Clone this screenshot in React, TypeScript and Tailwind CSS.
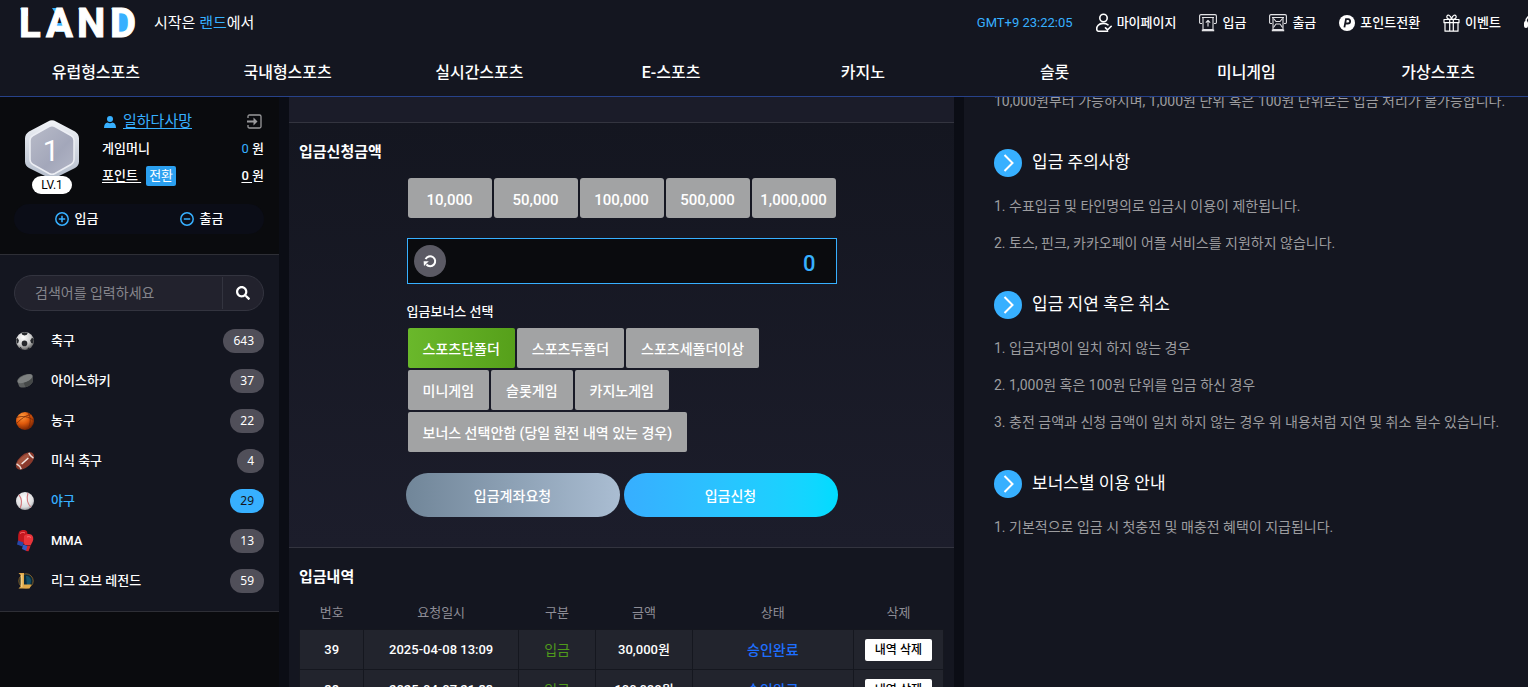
import { useState } from "react";
import type { ReactNode } from "react";
import { FaSearch } from "react-icons/fa";

type Sport = {
  name: string;
  count: number;
  icon: ReactNode;
};

type Deposit = {
  id: number;
  date: string;
  amount: string;
};

const menus = [
  "유럽형스포츠",
  "국내형스포츠",
  "실시간스포츠",
  "E-스포츠",
  "카지노",
  "슬롯",
  "미니게임",
  "가상스포츠",
];

const amounts = [10000, 50000, 100000, 500000, 1000000];

const bonuses = [
  "스포츠단폴더",
  "스포츠두폴더",
  "스포츠세폴더이상",
  "미니게임",
  "슬롯게임",
  "카지노게임",
  "보너스 선택안함 (당일 환전 내역 있는 경우)",
];

const deposits: Deposit[] = [
  { id: 39, date: "2025-04-08 13:09", amount: "30,000원" },
  { id: 38, date: "2025-04-07 21:33", amount: "100,000원" },
];

const notices = [
  {
    title: "입금 주의사항",
    items: [
      "1. 수표입금 및 타인명의로 입금시 이용이 제한됩니다.",
      "2. 토스, 핀크, 카카오페이 어플 서비스를 지원하지 않습니다.",
    ],
  },
  {
    title: "입금 지연 혹은 취소",
    items: [
      "1. 입금자명이 일치 하지 않는 경우",
      "2. 1,000원 혹은 100원 단위를 입금 하신 경우",
      "3. 충전 금액과 신청 금액이 일치 하지 않는 경우 위 내용처럼 지연 및 취소 될수 있습니다.",
    ],
  },
  {
    title: "보너스별 이용 안내",
    items: ["1. 기본적으로 입금 시 첫충전 및 매충전 혜택이 지급됩니다."],
  },
];

/* Icons */

const SoccerIcon = () => (
  <svg width="20" height="20" viewBox="0 0 20 20">
    <defs>
      <radialGradient id="soccer" cx="40%" cy="30%" r="70%">
        <stop offset="0" stopColor="#fff" />
        <stop offset="0.6" stopColor="#cfcfcf" />
        <stop offset="1" stopColor="#666" />
      </radialGradient>
    </defs>
    <circle cx="10" cy="10" r="9" fill="url(#soccer)" />
    <g fill="#26282c">
      <path d="M6.500 2 9.500 1.200l3.200.6-.8 2-2.400.6-2.200-.6z" />
      <circle cx="9.500" cy="12.400" r="2.800" />
      <path d="M1.200 8.200 2.600 7l1.400 2.600L3.200 12l-1.400.6z" />
      <path d="M18.800 8 17 6.800l-1.800 2.600 1 2.600 2 .4z" />
      <path d="m4.500 16.400 1.200-.4 1.400 2-1.200-.2zM15 17l-1.600-.4-1.400 2 1.400-.2z" />
    </g>
  </svg>
);

const PuckIcon = () => (
  <svg width="20" height="20" viewBox="0 0 20 20">
    <path d="M2.300 10.500c-.4-2.500 3.200-5.600 8.200-6.900 4-1 6.700-.4 7.200 1.400l.2 5c-.4 2.600-3.500 5.200-7.400 6.200-3.200.8-5.800.3-6.500-1.200z" fill="#5c5f5f" />
    <path d="M8.500 11.500c4.500-1 8-3.600 9.200-6l.2 4.500c-.4 2.600-3.500 5.200-7.400 6.200z" fill="#454848" />
    <ellipse cx="10" cy="7.800" rx="8" ry="3.300" transform="rotate(-24 10 7.800)" fill="#7d8080" />
  </svg>
);

const BasketballIcon = () => (
  <svg width="20" height="20" viewBox="0 0 20 20">
    <defs>
      <radialGradient id="basket" cx="35%" cy="25%" r="80%">
        <stop offset="0" stopColor="#ff9a3c" />
        <stop offset="0.5" stopColor="#e05a0c" />
        <stop offset="1" stopColor="#6e1f02" />
      </radialGradient>
    </defs>
    <circle cx="10" cy="10" r="9" fill="url(#basket)" />
    <path
      d="M2 6.500c5-2 12-1 16.500 3M1.500 12.500c5-5 9-8 14.500-9M13 2c3 4 3 10 0 16"
      fill="none"
      stroke="#7a2806"
      strokeWidth="0.800"
    />
  </svg>
);

const FootballIcon = () => (
  <svg width="20" height="20" viewBox="0 0 20 20">
    <g transform="rotate(-42 10 10)">
      <ellipse cx="10" cy="10" rx="11" ry="6.200" fill="#8a3a2c" />
      <ellipse cx="9.500" cy="8" rx="8" ry="3" fill="#a4543f" />
      <path d="M1.800 6.500q1.200 3.500 0 7M18.200 6.500q-1.200 3.500 0 7" stroke="#e9dcd8" strokeWidth="1.500" fill="none" />
      <path d="M5.500 10h9" stroke="#f3e9e6" strokeWidth="1.500" />
    </g>
  </svg>
);

const BaseballIcon = () => (
  <svg width="20" height="20" viewBox="0 0 20 20">
    <defs>
      <radialGradient id="baseball" cx="45%" cy="35%" r="70%">
        <stop offset="0" stopColor="#fff" />
        <stop offset="0.700" stopColor="#dcdcde" />
        <stop offset="1" stopColor="#8a8a90" />
      </radialGradient>
    </defs>
    <circle cx="10" cy="10" r="9" fill="url(#baseball)" />
    <path d="M4 3.800c3 4 3 9 1.200 13.200M13 2c-1.500 5-.8 10 2.600 14" fill="none" stroke="#d0787c" strokeWidth="1.100" />
  </svg>
);

const GloveIcon = () => (
  <svg width="20" height="24" viewBox="0 0 20 24">
    <path d="M4 3c2-2.500 6-2.600 8-.6l1 4.600-4 8-6-1.500C3.500 10 2.600 6 4 3z" fill="#c4181f" />
    <path d="M9 7c3-3 8.500-2.400 9.200 1.500.6 3-1.400 5.500-2.500 8L9.500 16c-1-2.500-.4-6-.5-9z" fill="#e8343a" />
    <path d="m3 11.500 5.500 2-1 4L2 15.500z" fill="#2747a8" />
    <path d="m8 15.500 5 1.500-1.500 5-4.500-2z" fill="#3459c4" />
    <path d="m12.500 16.600 3 .7-2 5-2.500-.3z" fill="#d52229" />
    <path d="M5 4.500c1.500-1.200 3.500-1.400 5-.5M12 8c1.500-.8 3-.4 4 .6" stroke="#ff7478" strokeWidth="0.900" fill="none" />
  </svg>
);

const LolIcon = () => (
  <svg width="20" height="20" viewBox="0 0 20 20">
    <circle cx="11" cy="10" r="7.200" fill="#0b2a3a" stroke="#7c5a25" strokeWidth="1" />
    <path d="M11 5c3 0 5 2 5 5s-2 5-4 5z" fill="#12506a" />
    <path d="M3.500 2H9v11.500h7.500L14.500 17.500H3.500L5.500 15.500V4z" fill="#e0a94a" />
    <path d="M6.800 3.500v12.600" stroke="#f6dc97" strokeWidth="1" />
  </svg>
);

const sports: Sport[] = [
  { name: "축구", count: 643, icon: <SoccerIcon /> },
  { name: "아이스하키", count: 37, icon: <PuckIcon /> },
  { name: "농구", count: 22, icon: <BasketballIcon /> },
  { name: "미식 축구", count: 4, icon: <FootballIcon /> },
  { name: "야구", count: 29, icon: <BaseballIcon /> },
  { name: "MMA", count: 13, icon: <GloveIcon /> },
  { name: "리그 오브 레전드", count: 59, icon: <LolIcon /> },
];

const MyPageIcon = () => (
  <svg width="16" height="20" viewBox="0 0 16 20" fill="none" stroke="#fff" strokeWidth="1.600" strokeLinecap="round" strokeLinejoin="round">
    <circle cx="7.500" cy="5" r="3.700" />
    <path d="M12 11.800c-2.500-2-7.500-2-9.800.4-1.600 1.600-1.600 3.600-1.300 4.800.2.800.8 1.200 1.500 1.200h9.200M9.500 14.800l2.200 2 3.500-3.500" />
  </svg>
);

const CashIcon = ({ out }: { out?: boolean }) => (
  <svg width="18" height="18" viewBox="0 0 18 18" fill="none" stroke="#e3e3e6" strokeWidth="1.100" strokeLinejoin="round">
    <path d="M3 9.500H1.500a.9.900 0 0 1-.9-.9V2c0-.8.600-1.400 1.400-1.400h14c.8 0 1.400.600 1.400 1.400v6.600a.9.900 0 0 1-.9.900H15" />
    <path d="M3 3.500h12M4 3.500v12h10v-12" />
    <path d="M2.800 16.400h12.400" strokeWidth="1.800" />
    {out ? (
      <path d="m4.500 4.500 2.500 3h4l2.500-3M4.500 13.500l2.500-3.500h4l2.500 3.500" />
    ) : (
      <path d="M9 12.500V6.500M6.800 8.600 9 6.400l2.200 2.200" />
    )}
  </svg>
);

const PointIcon = () => (
  <svg width="16" height="16" viewBox="0 0 16 16">
    <circle cx="8" cy="8" r="8" fill="#fff" />
    <path d="M5.400 12.400 7 4.200h2.200c2.600 0 2.700 4.300-.4 4.300H6.400" fill="none" stroke="#141620" strokeWidth="1.800" />
  </svg>
);

const EventIcon = () => (
  <svg width="17" height="18" viewBox="0 0 17 18" fill="none" stroke="#fff" strokeWidth="1.200" strokeLinejoin="round">
    <path d="M1 5.500h15v3.200H1zM2 8.700h13v8.500H2zM6.700 5.500v11.700M10.300 5.500v11.700" />
    <path d="M8.500 5.300C6 5.500 3.500 4.500 3.800 2.500 4.200.3 7.600.6 8.500 5.300zM8.500 5.300c2.500.2 5-.8 4.700-2.800-.4-2.200-3.800-1.900-4.700 2.800z" />
  </svg>
);

const SupportIcon = () => (
  <svg width="18" height="18" viewBox="0 0 18 18" fill="none" stroke="#fff" strokeWidth="1.500">
    <path d="M2 9V7.500a7 6.500 0 0 1 14 0V9" />
    <rect x="0" y="7" width="4" height="7" rx="2" fill="#fff" stroke="none" />
    <rect x="14" y="7" width="4" height="7" rx="2" fill="#fff" stroke="none" />
  </svg>
);

const LevelBadge = () => (
  <svg width="56" height="60" viewBox="0 0 56 60">
    <defs>
      <linearGradient id="rim" x1="0" y1="0" x2="0" y2="1">
        <stop offset="0" stopColor="#f1f3f7" />
        <stop offset="1" stopColor="#b3bccb" />
      </linearGradient>
      <linearGradient id="face" x1="0" y1="0" x2="1" y2="1">
        <stop offset="0" stopColor="#b9bcc9" />
        <stop offset="0.600" stopColor="#a3a7ba" />
        <stop offset="1" stopColor="#b4b7c7" />
      </linearGradient>
    </defs>
    <path d="M24 1.500Q28 -1 32 1.500L51 11.500Q55 14 55 18.500v23q0 4-4 6.500L32 57.500q-4 2-8 0L5 48Q1 45.500 1 41.500V18.500q0-4.500 4-7z" fill="url(#rim)" />
    <path d="M25 6.500q3-1.500 6 0l16 9q3 1.500 3 5v19q0 3-3 5l-16 9q-3 1.500-6 0l-16-9q-3-2-3-5v-19q0-3.500 3-5z" fill="url(#face)" stroke="#eceef4" strokeWidth="1.500" />
    <text x="27" y="41" textAnchor="middle" fill="#fff" fontSize="29" fontWeight="400" fontFamily="Roboto, sans-serif">
      1
    </text>
  </svg>
);

const Logo = () => (
  <svg width="118" height="44" viewBox="0 0 118 44" role="img" aria-label="LAND">
    <path d="M0 7h8v8H3zM32 7h8l-3 8zM58 7h8v9h-4zM91 7h8v8h-4zM36 22h9v9h-9zM97 11h12v20H97z" fill="#37b0ff" />
    <g fill="#fff" stroke="#fff" strokeWidth="1" fontSize="40" fontWeight="700" fontFamily="Roboto, sans-serif">
      <text x="-1" y="36">L</text>
      <text x="26" y="36">A</text>
      <text x="57" y="36">N</text>
      <text x="90" y="36">D</text>
    </g>
  </svg>
);

const topLinks = [
  { label: "마이페이지", icon: <MyPageIcon /> },
  { label: "입금", icon: <CashIcon /> },
  { label: "출금", icon: <CashIcon out /> },
  { label: "포인트전환", icon: <PointIcon /> },
  { label: "이벤트", icon: <EventIcon /> },
];

function Header() {
  return (
    <header className="-mr-1.5 shrink-0 border-b border-[#27428a] bg-[#141620]">
      <div className="flex h-11 items-center pt-0.5 pl-5">
        <a href="#home">
          <Logo />
        </a>
        <p className="ml-4 text-[15px]">
          시작은 <span className="text-[#37b0ff]">랜드</span>에서
        </p>
        <div className="-mr-2 ml-auto flex items-center gap-[23px] text-[13px] font-medium whitespace-nowrap">
          <span className="font-normal text-[#37b0ff]">GMT+9 23:22:05</span>
          {topLinks.map((link) => (
            <a key={link.label} href="#menu" className="flex items-center gap-[5px]">
              {link.icon}
              {link.label}
            </a>
          ))}
          <a href="#support" aria-label="고객센터">
            <SupportIcon />
          </a>
        </div>
      </div>
      <nav className="grid h-[52px] grid-cols-8 items-center pt-1.5 text-center text-base font-medium">
        {menus.map((menu) => (
          <a key={menu} href="#menu">
            {menu}
          </a>
        ))}
      </nav>
    </header>
  );
}

function Profile() {
  return (
    <div className="border-b border-[#2e2f36] pt-[11px] pr-[15px] pb-5 pl-[14px] text-[13px] font-medium">
      <div className="flex pl-[10px]">
        <div className="flex w-14 flex-col items-center pt-3">
          <LevelBadge />
          <span className="relative -mt-1 h-[18px] w-10 rounded-full bg-white text-center text-xs leading-[18px] font-normal text-black">
            LV.1
          </span>
        </div>
        <div className="ml-[22px] flex-1">
          <div className="flex h-[27px] items-center">
            <svg width="12" height="12" viewBox="0 0 12 12" fill="#37b0ff" className="mr-[7px] ml-0.5">
              <circle cx="6" cy="3" r="3" />
              <path d="M0 12c0-3.500 1.500-5.300 3.500-5.500 1.500 1 3.500 1 5 0 2 .2 3.500 2 3.500 5.500z" />
            </svg>
            <a href="#me" className="text-[15px] font-normal text-[#37b0ff] underline underline-offset-2">
              일하다사망
            </a>
            <button aria-label="로그아웃" className="mr-0.5 ml-auto">
              <svg width="15" height="15" viewBox="0 0 15 15" fill="none" stroke="#9a9a9c" strokeWidth="1.300">
                <path d="M1 4V2.500Q1 1 2.500 1h10Q14 1 14 2.500v10q0 1.500-1.500 1.500h-10Q1 14 1 12.500V11" />
                <path d="M0 7.500h8" strokeWidth="2" />
                <path d="m6.500 3.500 4 4-4 4z" fill="#9a9a9c" stroke="none" />
              </svg>
            </button>
          </div>
          <div className="flex h-[27px] items-center">
            <span>게임머니</span>
            <span className="ml-auto">
              <span className="font-normal text-[#37b0ff]">0</span> 원
            </span>
          </div>
          <div className="flex h-[27px] items-center">
            <a href="#point" className="underline underline-offset-2">
              포인트&nbsp;
            </a>
            <button className="ml-[5px] h-5 w-[30px] rounded-xs bg-[#2ba0f0] font-normal">전환</button>
            <a href="#point" className="ml-auto">
              <span className="underline underline-offset-2">0&nbsp;</span>원
            </a>
          </div>
        </div>
      </div>
      <div className="mt-[10px] grid h-[30px] grid-cols-2 rounded-full bg-[#0b0d17]">
        <button className="flex items-center justify-center gap-1.5">
          <svg width="14" height="14" viewBox="0 0 14 14" fill="none" stroke="#37b0ff" strokeWidth="1.500">
            <circle cx="7" cy="7" r="6.200" />
            <path d="M7 3.800v6.400M3.800 7h6.400" />
          </svg>
          입금
        </button>
        <button className="flex items-center justify-center gap-1.5">
          <svg width="14" height="14" viewBox="0 0 14 14" fill="none" stroke="#37b0ff" strokeWidth="1.500">
            <circle cx="7" cy="7" r="6.200" />
            <path d="M3.800 7h6.400" />
          </svg>
          출금
        </button>
      </div>
    </div>
  );
}

function Sidebar() {
  const [selected, setSelected] = useState("야구");

  return (
    <aside className="w-[279px] shrink-0 bg-[#0a0b0e]">
      <Profile />
      <div className="border-b border-[#2e2f36] bg-[#141620] pt-5 pr-[15px] pb-[10px] pl-[14px]">
        <form className="mb-[10px] flex h-9 items-center rounded-full border border-[#33343f] bg-[#22222d]">
          <input
            aria-label="검색"
            placeholder="검색어를 입력하세요"
            className="min-w-0 flex-1 pl-5 text-sm outline-none placeholder:text-[#85858c]"
          />
          <button type="button" aria-label="검색하기" className="flex h-8 w-[41px] items-center justify-center border-l border-[#33343f]">
            <FaSearch size={14} />
          </button>
        </form>
        <ul>
          {sports.map((sport) => {
            const isActive = sport.name === selected;
            return (
              <li key={sport.name}>
                <button
                  onClick={() => setSelected(sport.name)}
                  className={`flex h-10 w-full items-center text-[13px] font-medium ${isActive ? "text-[#37b0ff]" : "text-white"}`}
                >
                  <span className="ml-px mr-4">{sport.icon}</span>
                  {sport.name}
                  <span
                    className={`ml-auto h-6 rounded-full px-[10px] font-['Noto_Sans'] text-xs leading-6 font-normal ${
                      isActive ? "bg-[#37b0ff] text-[#141620]" : "bg-[#504f59] text-white"
                    }`}
                  >
                    {sport.count}
                  </span>
                </button>
              </li>
            );
          })}
        </ul>
      </div>
    </aside>
  );
}

function DepositForm() {
  const [amount, setAmount] = useState(0);
  const [bonus, setBonus] = useState(bonuses[0]);

  return (
    <section className="border-b border-[#33343f] bg-linear-to-b from-[#141620] to-[#1c1d2b] px-[10px] pt-4 pb-[30px]">
      <h2 className="text-[15px] leading-[26px] font-bold">입금신청금액</h2>
      <div className="mx-auto mt-[13px] w-[430px] max-w-full">
        <div className="grid grid-cols-5 gap-0.5 px-px">
          {amounts.map((value) => (
            <button
              key={value}
              type="button"
              onClick={() => setAmount(amount + value)}
              className="h-10 rounded-[3px] bg-[#a2a3a4] pt-1 text-[15px] font-medium"
            >
              {value.toLocaleString("en-US")}
            </button>
          ))}
        </div>
        <div className="mt-5 flex h-[46px] items-center border border-[#37b0ff] bg-[#0a0b0e] pr-5 pl-1.5">
          <button
            type="button"
            aria-label="초기화"
            onClick={() => setAmount(0)}
            className="flex size-8 shrink-0 items-center justify-center rounded-full bg-[#5b5a64]"
          >
            <svg width="14" height="14" viewBox="0 0 14 14">
              <path d="M2.600 5.200A5 5 0 1 1 3.400 10.500" fill="none" stroke="#fff" strokeWidth="2" />
              <path d="M.6 7.200h5.200L1 12z" fill="#fff" />
            </svg>
          </button>
          <input
            aria-label="입금신청금액"
            readOnly
            value={amount.toLocaleString("en-US")}
            className="min-w-0 flex-1 pt-1 text-right text-[22px] font-medium text-[#37b0ff] outline-none"
          />
        </div>
        <p className="mt-4 text-[13px] leading-6 font-medium">입금보너스 선택</p>
        <div className="mt-1 flex flex-wrap gap-0.5 px-px">
          {bonuses.map((item) => (
            <button
              key={item}
              type="button"
              onClick={() => setBonus(item)}
              className={`h-10 rounded-xs px-[15px] pt-px text-sm font-medium ${
                item === bonus ? "bg-linear-to-r from-[#6ab82b] to-[#56a01a]" : "bg-[#a2a3a4]"
              }`}
            >
              {item}
            </button>
          ))}
        </div>
        <div className="-mx-px mt-[21px] grid grid-cols-2 gap-1 text-sm font-medium">
          <button type="button" className="h-11 rounded-full bg-linear-to-r from-[#718699] to-[#aabdd2] pt-px">
            입금계좌요청
          </button>
          <button type="button" className="h-11 rounded-full bg-linear-to-r from-[#37aeff] to-[#00dcff] pt-px">
            입금신청
          </button>
        </div>
      </div>
    </section>
  );
}

function DepositHistory() {
  return (
    <section className="px-[10px] pt-4">
      <h2 className="text-[15px] leading-[26px] font-bold">입금내역</h2>
      <table className="mt-[3px] w-full table-fixed border-collapse text-center text-[13px]">
        <colgroup>
          <col className="w-[10%]" />
          <col className="w-[24%]" />
          <col className="w-[12%]" />
          <col className="w-[15%]" />
          <col className="w-[25%]" />
          <col className="w-[14%]" />
        </colgroup>
        <thead>
          <tr className="h-9 text-[#8e8d96]">
            {["번호", "요청일시", "구분", "금액", "상태", "삭제"].map((head) => (
              <th key={head} className="pt-1 font-normal">
                {head}
              </th>
            ))}
          </tr>
        </thead>
        <tbody>
          {deposits.map((row) => (
            <tr key={row.id} className="h-10 bg-[#22242d] font-medium *:border *:border-[#15171f] *:pt-0.5">
              <td>{row.id}</td>
              <td>{row.date}</td>
              <td className="text-sm font-normal text-[#4f9a1c]">입금</td>
              <td>{row.amount}</td>
              <td className="text-sm text-[#1e6fff]">승인완료</td>
              <td>
                <button className="mx-auto block h-[22px] rounded-xs bg-white px-[10px] text-xs whitespace-nowrap text-black">
                  내역 삭제
                </button>
              </td>
            </tr>
          ))}
        </tbody>
      </table>
    </section>
  );
}

function Notice() {
  return (
    <section className="min-w-0 flex-1 bg-[#141620] pl-[30px]">
      <p className="-mt-[14px] text-sm leading-[37px] whitespace-nowrap text-[#9c9c9f]">
        10,000원부터 가능하시며, 1,000원 단위 혹은 100원 단위로는 입금 처리가 불가능합니다.
      </p>
      {notices.map((notice) => (
        <div key={notice.title} className="mt-[29px]">
          <h3 className="flex h-7 items-center gap-[10px] text-[17px] font-normal">
            <svg width="28" height="28" viewBox="0 0 28 28" fill="none">
              <circle cx="14" cy="14" r="14" fill="#37b0ff" />
              <path d="m10.500 6 8 8-8 8" stroke="#fff" strokeWidth="2" />
            </svg>
            {notice.title}
          </h3>
          <ul className="mt-[11px] text-sm leading-[37px] whitespace-nowrap text-[#9c9c9f]">
            {notice.items.map((item) => (
              <li key={item}>{item}</li>
            ))}
          </ul>
        </div>
      ))}
    </section>
  );
}

export default function App() {
  return (
    <div className="flex h-screen flex-col overflow-hidden bg-[#0b0d15] font-[Roboto,'Noto_Sans_CJK_KR',sans-serif] text-white">
      <Header />
      <div className="flex min-h-0 flex-1 gap-[10px] overflow-hidden">
        <Sidebar />
        <main className="w-[665px] shrink-0 overflow-hidden bg-[#141620]">
          <div className="h-[26px] border-b border-[#33343f] bg-[#1b1c29]" />
          <DepositForm />
          <DepositHistory />
        </main>
        <Notice />
      </div>
    </div>
  );
}
